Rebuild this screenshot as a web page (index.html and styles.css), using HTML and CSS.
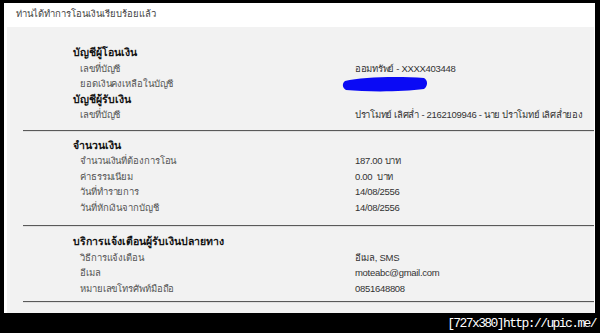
FILE: index.html
```html
<!DOCTYPE html>
<html lang="th">
<head>
<meta charset="utf-8">
<title>โอนเงิน</title>
<link rel="stylesheet" href="styles.css">
</head>
<body>
<div class="screen">
  <div class="window">
    <div class="header">ท่านได้ทำการโอนเงินเรียบร้อยแล้ว</div>
    <div class="content">
      <section class="group first">
        <div class="title">บัญชีผู้โอนเงิน</div>
        <div class="row"><span class="label">เลขที่บัญชี</span><span class="value">ออมทรัพย์ - XXXX403448</span></div>
        <div class="row"><span class="label">ยอดเงินคงเหลือในบัญชี</span><span class="value redact"><svg class="scribble" width="86" height="19" viewBox="0 0 86 19"><path d="M3 7 C 20 3, 55 2, 82 4 C 86 6, 86 12, 82 15 C 60 18, 25 18, 4 16 C 0 14, 0 9, 3 7 Z" fill="#0a0af5"/></svg></span></div>
        <div class="title">บัญชีผู้รับเงิน</div>
        <div class="row"><span class="label">เลขที่บัญชี</span><span class="value">ปราโมทย์ เลิศล่ำ - 2162109946 - นาย ปราโมทย์ เลิศล่ำยอง</span></div>
      </section>
      <hr class="rule r1">
      <section class="group second">
        <div class="title">จำนวนเงิน</div>
        <div class="row"><span class="label">จำนวนเงินที่ต้องการโอน</span><span class="value">187.00 บาท</span></div>
        <div class="row"><span class="label">ค่าธรรมเนียม</span><span class="value">0.00&nbsp; บาท</span></div>
        <div class="row"><span class="label">วันที่ทำรายการ</span><span class="value">14/08/2556</span></div>
        <div class="row"><span class="label">วันที่หักเงินจากบัญชี</span><span class="value">14/08/2556</span></div>
      </section>
      <hr class="rule r2">
      <section class="group third">
        <div class="title">บริการแจ้งเตือนผู้รับเงินปลายทาง</div>
        <div class="row"><span class="label">วิธีการแจ้งเตือน</span><span class="value">อีเมล, SMS</span></div>
        <div class="row"><span class="label">อีเมล</span><span class="value">moteabc@gmail.com</span></div>
        <div class="row"><span class="label">หมายเลขโทรศัพท์มือถือ</span><span class="value">0851648808</span></div>
      </section>
      <hr class="rule r3">
    </div>
  </div>
  <div class="watermark">[727x380]http://upic.me/</div>
</div>
</body>
</html>
```

FILE: styles.css
```css
* { box-sizing: border-box; }
html, body { margin: 0; padding: 0; background: #000; }
body { font-family: Tahoma, "Liberation Sans", "Noto Sans", sans-serif; font-size: 9.5px; color: #444; }
.screen { position: relative; width: 600px; height: 333px; background: #000; overflow: hidden; padding: 3px 0 0 4px; }
.window { width: 591px; height: 310px; background: #fff; display: flex; flex-direction: column; }
.header { height: 24px; line-height: 22px; padding-left: 12px; font-size: 9.5px; color: #444; }
.content { flex: 1; margin: 0 1px 0 3px; background: #f2f2f2; padding-top: 18px; }
.group { padding-left: 66px; }
.title { font-weight: bold; color: #111; font-size: 10.5px; line-height: 15.5px; }
.row { display: grid; grid-template-columns: 275px 1fr; line-height: 15.5px; padding-left: 7px; }
.label { color: #555; letter-spacing: -0.1px; }
.value { color: #333; white-space: nowrap; letter-spacing: -0.3px; }
.redact { position: relative; }
.scribble { position: absolute; left: -13px; top: -2px; }
.rule { border: 0; border-top: 1px solid #5a5a5a; border-bottom: 1px solid #e0e0e0; margin: 7px 0 0 16px; height: 0; }
.r1 { margin-top: 7px; }
.second { padding-top: 6px; }
.r2 { margin-top: 10px; }
.third { padding-top: 7px; }
.r3 { margin-top: 5px; }
.watermark { position: absolute; right: 4px; bottom: 2px; color: #fff; font-family: "Liberation Mono", monospace; font-size: 13px; letter-spacing: -1.6px; }
```
